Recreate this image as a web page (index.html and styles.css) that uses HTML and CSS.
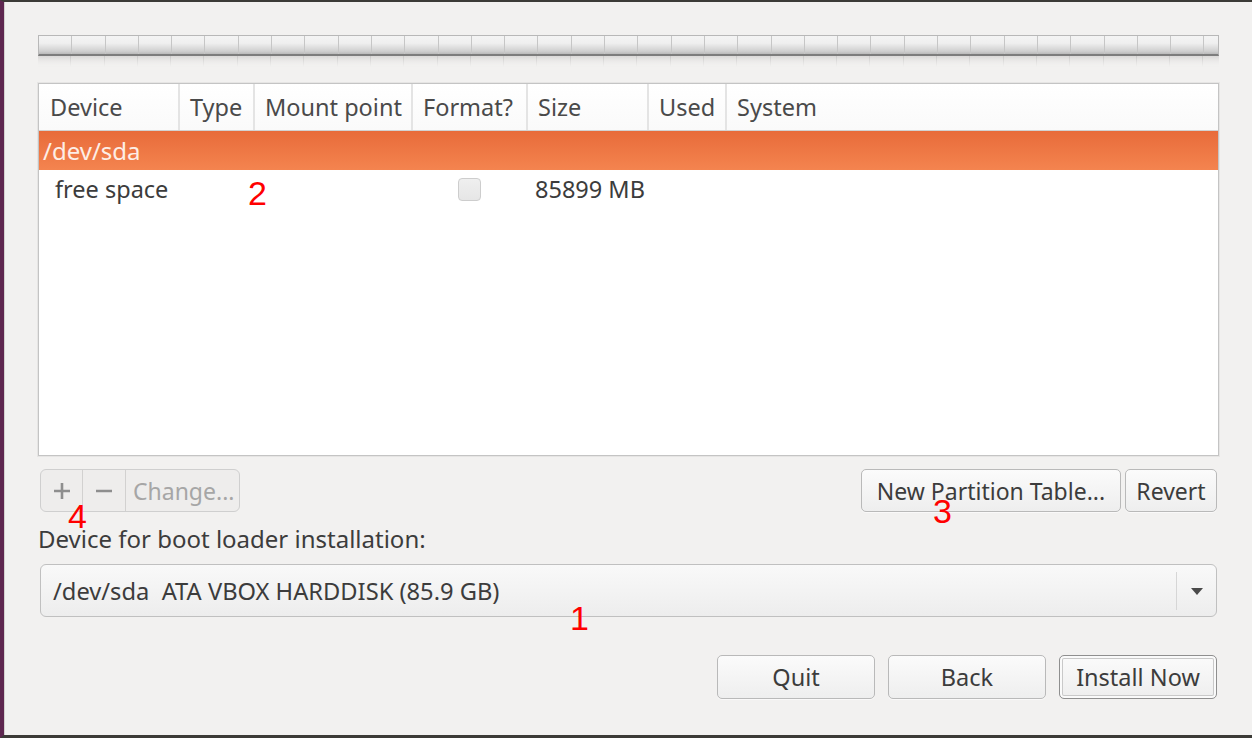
FILE: index.html
```html
<!DOCTYPE html>
<html>
<head>
<meta charset="utf-8">
<link rel="stylesheet" href="styles.css">
</head>
<body>
<div class="window">
  <div class="partbar">
    <div class="bar"></div>
    <div class="reflect"></div>
  </div>

  <div class="table">
    <div class="thead">
      <div class="th c-dev">Device</div>
      <div class="th c-type">Type</div>
      <div class="th c-mount">Mount point</div>
      <div class="th c-fmt">Format?</div>
      <div class="th c-size">Size</div>
      <div class="th c-used">Used</div>
      <div class="th c-sys">System</div>
    </div>
    <div class="row selected"><span class="disk">/dev/sda</span></div>
    <div class="row">
      <div class="td c-dev indent">free space</div>
      <div class="td c-type"></div>
      <div class="td c-mount"></div>
      <div class="td c-fmt"><span class="check"></span></div>
      <div class="td c-size">85899 MB</div>
      <div class="td c-used"></div>
      <div class="td c-sys"></div>
    </div>
  </div>

  <div class="toolbar">
    <div class="btngroup">
      <span class="seg seg-icon">
        <svg width="20" height="20" viewBox="0 0 20 20"><path d="M10 2v16M2 10h16" stroke="#8e8e8e" stroke-width="2.6" fill="none"/></svg>
      </span>
      <span class="seg seg-icon">
        <svg width="20" height="20" viewBox="0 0 20 20"><path d="M2 10h16" stroke="#8e8e8e" stroke-width="2.6" fill="none"/></svg>
      </span>
      <span class="seg seg-text">Change...</span>
    </div>
    <div class="spacer"></div>
    <button class="btn btn-npt">New Partition Table...</button>
    <button class="btn btn-revert">Revert</button>
  </div>

  <div class="label">Device for boot loader installation:</div>

  <div class="combo">
    <span class="combo-text">/dev/sda&nbsp;&nbsp;ATA VBOX HARDDISK (85.9 GB)</span>
    <span class="combo-arrow"><svg width="14" height="10" viewBox="0 0 14 10"><path d="M1 2h12L7 9z" fill="#4a4a4a"/></svg></span>
  </div>

  <div class="actions">
    <button class="btn btn-act">Quit</button>
    <button class="btn btn-act">Back</button>
    <button class="btn btn-act btn-default">Install Now</button>
  </div>

  <span class="mark m1">1</span>
  <span class="mark m2">2</span>
  <span class="mark m3">3</span>
  <span class="mark m4">4</span>
</div>
</body>
</html>
```

FILE: styles.css
```css
* { box-sizing: border-box; }
html, body { margin: 0; padding: 0; }
body {
  width: 1252px;
  height: 738px;
  overflow: hidden;
  background: #f2f1f0;
  font-family: "Noto Sans", "Open Sans", sans-serif;
  color: #3c3c3c;
}
.window {
  position: relative;
  width: 1252px;
  height: 738px;
  border-top: 2px solid #3c3b37;
  border-bottom: 3px solid #3c3b37;
  border-left: 4px solid #5e2750;
  box-shadow: inset 1px 0 0 #d4d2cf;
  padding: 33px 33px 0 34px;
  display: flex;
  flex-direction: column;
}

/* partition bar */
.partbar { height: 32px; }
.bar {
  height: 21px;
  border: 1px solid #b8b8b8;
  border-bottom: 2px solid #7d7d7d;
  background:
    repeating-linear-gradient(90deg, transparent 0 32.3px, #c6c6c6 32.3px 33.3px),
    linear-gradient(#f4f4f4 0%, #efefef 40%, #cfcfcf 85%, #b9b9b9 100%);
}
.reflect {
  height: 11px;
  background:
    repeating-linear-gradient(90deg, transparent 0 32.3px, rgba(180,180,180,0.5) 32.3px 33.3px),
    linear-gradient(#d9d8d7, #f2f1f0);
  -webkit-mask-image: linear-gradient(#000, transparent);
  mask-image: linear-gradient(#000, transparent);
}

/* table */
.table {
  margin-top: 16px;
  height: 373px;
  background: #fff;
  border: 1px solid #c4c4c4;
  box-shadow: 0 0 0 1px #e6e5e4;
}
.thead {
  display: flex;
  height: 47px;
  background: linear-gradient(#ffffff, #fafafa);
  border-bottom: 1px solid #d2d2d2;
}
.th {
  font-size: 23.5px;
  line-height: 46px;
  padding-left: 11px;
  color: #4a4a4a;
  border-right: 2px solid #e4e4e4;
  white-space: nowrap;
  overflow: hidden;
}
.th.c-sys { border-right: 0; flex: 1; }
.c-dev { width: 141px; }
.c-type { width: 75px; }
.c-mount { width: 158px; }
.c-fmt { width: 115px; }
.c-size { width: 121px; }
.c-used { width: 78px; }
.c-sys { flex: 1; }
.th.c-type, .th.c-mount, .th.c-fmt, .th.c-size, .th.c-used, .th.c-sys { padding-left: 10px; }

.row {
  display: flex;
  height: 38px;
  align-items: center;
}
.row.selected {
  height: 39px;
  background: linear-gradient(#e86b3a, #f4844f);
  padding-left: 4px;
}
.disk {
  color: #fdeee6;
  font-size: 24px;
}
.td {
  font-size: 23.5px;
  padding-left: 7px;
  color: #3c3c3c;
  white-space: nowrap;
}
.td.indent { padding-left: 16px; }
.td.c-fmt { padding-left: 45px; display: flex; align-items: center; }
.check {
  display: inline-block;
  width: 23px;
  height: 23px;
  border: 1px solid #cdcdcd;
  border-radius: 4px;
  background: linear-gradient(#efefef, #e6e6e6);
}

/* toolbar */
.toolbar {
  display: flex;
  margin: 13px 2px 0 2px;
  height: 43px;
}
.spacer { flex: 1; }
.btngroup {
  display: flex;
  height: 43px;
  border: 1px solid #cfcfcf;
  border-radius: 6px;
  background: #eeedec;
  overflow: hidden;
}
.seg {
  display: flex;
  align-items: center;
  justify-content: center;
  border-right: 1px solid #d2d1d0;
}
.seg-icon { width: 42px; }
.seg-icon:nth-child(2) { width: 43px; }
.seg-text {
  border-right: 0;
  width: 113px;
  font-size: 23px;
  color: #a6a6a6;
  justify-content: flex-start;
  padding-left: 7px;
  white-space: nowrap;
}

.btn {
  font-family: "Noto Sans", "Open Sans", sans-serif;
  font-size: 23px;
  color: #3c3c3c;
  background: linear-gradient(#fbfbfb, #eeeeee);
  border: 1px solid #b9b9b9;
  border-radius: 5px;
  padding: 0;
  margin: 0;
  height: 43px;
  white-space: nowrap;
  box-shadow: 0 1px 0 rgba(255,255,255,0.6);
}
.btn-npt { width: 260px; margin-right: 4px; }
.btn-revert { width: 92px; }

.label {
  margin: 14px 0 0 0;
  font-size: 24px;
  line-height: 26px;
  color: #3c3c3c;
  white-space: nowrap;
}

.combo {
  margin: 12px 2px 0 2px;
  height: 53px;
  display: flex;
  align-items: center;
  border: 1px solid #c0c0c0;
  border-radius: 6px;
  background: linear-gradient(#f9f9f9, #ededed);
}
.combo-text {
  flex: 1;
  font-size: 23.7px;
  padding-left: 12px;
  color: #3c3c3c;
  white-space: nowrap;
}
.combo-arrow {
  width: 40px;
  height: 38px;
  border-left: 1px solid #d6d6d6;
  display: flex;
  align-items: center;
  justify-content: center;
}

.actions {
  display: flex;
  justify-content: flex-end;
  gap: 13px;
  margin: 38px 2px 0 2px;
}
.btn-act { width: 158px; height: 44px; font-size: 23.5px; }
.btn-default {
  border: 1px solid #8f8f8f;
  box-shadow: inset 0 0 0 2px #fafafa, inset 0 0 0 3px #c9c9c9;
}

/* red annotation numbers */
.mark {
  position: absolute;
  color: #ff0000;
  font-family: "Liberation Sans", sans-serif;
  font-size: 34px;
  line-height: 34px;
}
.m1 { left: 566px; top: 599px; }
.m2 { left: 244px; top: 174px; }
.m3 { left: 929px; top: 492px; }
.m4 { left: 64px; top: 497px; }
```
